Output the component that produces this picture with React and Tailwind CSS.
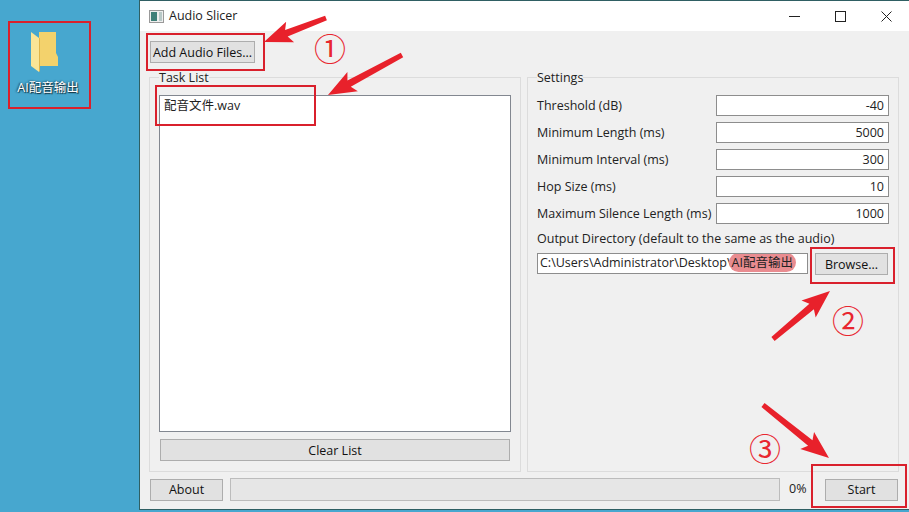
import React from "react";

const font = { fontFamily: '"Open Sans", "Noto Sans CJK SC", sans-serif' };

const settings = [
  ["Threshold (dB)", "-40"],
  ["Minimum Length (ms)", "5000"],
  ["Minimum Interval (ms)", "300"],
  ["Hop Size (ms)", "10"],
  ["Maximum Silence Length (ms)", "1000"],
];

// tapered red arrow from tail to head
function arrowPoints([x1, y1], [x2, y2]) {
  const len = Math.hypot(x2 - x1, y2 - y1);
  const ux = (x2 - x1) / len;
  const uy = (y2 - y1) / len;
  const nx = -uy;
  const ny = ux;
  const at = (along, side) =>
    `${x1 + ux * along + nx * side},${y1 + uy * along + ny * side}`;
  const neck = len - 24;
  return [
    at(0, -2.5),
    at(neck, -3.5),
    at(neck - 4, -11),
    at(len, 0),
    at(neck - 4, 11),
    at(neck, 3.5),
    at(0, 2.5),
  ].join(" ");
}

const arrows = [
  [[326, 18], [264, 42]],
  [[402, 55], [328, 95]],
  [[773, 339], [830, 291]],
  [[763, 405], [829, 458]],
];

function Btn({ className, children }) {
  return (
    <div className={`flex items-center justify-center whitespace-nowrap pt-[2px] bg-[#e1e1e1] border border-[#adadad] text-[12.5px] text-[#111] ${className}`}>
      {children}
    </div>
  );
}

function Mark({ className }) {
  return <div className={`absolute border-2 border-[#d9202c] ${className}`} />;
}

function Num({ className, children }) {
  return (
    <span className={`absolute text-[32px] leading-none text-[#e8262f] ${className}`} style={{ fontFamily: '"Noto Sans CJK SC", sans-serif' }}>
      {children}
    </span>
  );
}

export default function App() {
  return (
    <div className="relative flex w-[909px] h-[512px] overflow-hidden bg-[#47a7cf]" style={font}>
      {/* desktop */}
      <div className="w-[139px] shrink-0 flex flex-col items-center pt-[31px] pr-[43px]">
        <svg width="30" height="42" viewBox="0 0 30 42" className="shrink-0 mr-[6px]">
          <path d="M9 1h17v21l2 4v9H9z" fill="#f3d26c" />
          <path d="M1 1l8 6v34l-8-6z" fill="#fbe596" />
          <path d="M9 7v34l1-1V7z" fill="#e0b548" />
        </svg>
        <div className="mt-[6px] whitespace-nowrap text-[12.5px] leading-[18px] text-white [text-shadow:1px_1px_1px_#12303c,-1px_0_2px_#12303c]">
          AI配音输出
        </div>
      </div>

      {/* window */}
      <div className="w-[770px] shrink-0 flex flex-col h-[510px] border-l border-t border-b border-[#2f5f63] bg-[#f0f0f0] text-[12.5px] text-[#222]">
        <div className="h-[30px] shrink-0 bg-white flex items-center pl-[9px]">
          <svg width="15" height="13" viewBox="0 0 15 13" className="mr-[5px]">
            <rect x="0.5" y="0.5" width="14" height="12" fill="#eee" stroke="#999" />
            <rect x="2" y="2" width="6" height="9" fill="#3f7f78" />
            <rect x="10" y="2" width="3" height="9" fill="#b9c9c8" />
          </svg>
          <span>Audio Slicer</span>
          <div className="ml-auto flex">
            <div className="w-[46px] h-[30px] flex items-center justify-center">
              <svg width="11" height="11" viewBox="0 0 11 11"><path d="M0 5.5h11" stroke="#222" /></svg>
            </div>
            <div className="w-[46px] h-[30px] flex items-center justify-center">
              <svg width="11" height="11" viewBox="0 0 11 11"><rect x="0.5" y="0.5" width="10" height="10" fill="none" stroke="#222" /></svg>
            </div>
            <div className="w-[46px] h-[30px] flex items-center justify-center">
              <svg width="11" height="11" viewBox="0 0 11 11"><path d="M0.5 0.5l10 10M10.5 0.5l-10 10" stroke="#222" /></svg>
            </div>
          </div>
        </div>

        <div className="flex-1 flex flex-col pl-[9px] pr-[10px] pt-[10px] pb-[8px]">
          <Btn className="ml-[1px] w-[105px] h-[22px]">Add Audio Files...</Btn>

          <div className="flex gap-[6px] mt-[5px] h-[404px]">
            <fieldset className="w-[372px] h-[404px] border border-[#dcdcdc] px-[9px] pb-[9px] flex flex-col">
              <legend className="pt-[2px] text-[12.5px] leading-[16px]">Task List</legend>
              <div className="mt-[9px] h-[337px] border border-[#828790] bg-white pl-[4px] pt-[1px] leading-[18px]">
                配音文件.wav
              </div>
              <Btn className="mt-[7px] h-[22px] mx-[1px]">Clear List</Btn>
            </fieldset>

            <fieldset className="w-[372px] h-[404px] border border-[#dcdcdc] px-[9px]">
              <legend className="pt-[2px] text-[12.5px] leading-[16px]">Settings</legend>
              <div className="mt-[9px] flex flex-col gap-[6px]">
                {settings.map(([label, value]) => (
                  <div key={label} className="flex items-center justify-between h-[21px]">
                    <span className="pt-[2px] whitespace-nowrap">{label}</span>
                    <div className="w-[173px] h-[21px] border border-[#8d8d8d] bg-white text-right pr-[4px] leading-[20px]">
                      {value}
                    </div>
                  </div>
                ))}
              </div>
              <div className="mt-[6px] leading-[18px]">Output Directory (default to the same as the audio)</div>
              <div className="mt-[5px] flex items-start gap-[7px]">
                <div className="w-[271px] h-[21px] border border-[#8d8d8d] bg-white pl-[2px] leading-[18px] whitespace-nowrap overflow-hidden">
                  C:\Users\Administrator\Desktop\<span className="-ml-[3px] px-[3px] py-[1px] rounded-full bg-[#e98c90]">AI配音输出</span>
                </div>
                <Btn className="w-[73px] h-[22px]">Browse...</Btn>
              </div>
            </fieldset>
          </div>

          <div className="mt-[6px] flex items-center h-[23px]">
            <Btn className="ml-[1px] w-[73px] h-[22px]">About</Btn>
            <div className="ml-[7px] w-[550px] h-[23px] border border-[#bcbcbc] bg-[#e6e6e6]" />
            <span className="ml-[9px] w-[18px]">0%</span>
            <Btn className="ml-[18px] w-[73px] h-[22px]">Start</Btn>
          </div>
        </div>
      </div>

      {/* red annotations drawn over the screenshot */}
      <Mark className="left-[8px] top-[21px] w-[83px] h-[88px]" />
      <Mark className="left-[146px] top-[33px] w-[119px] h-[38px]" />
      <Mark className="left-[155px] top-[85px] w-[161px] h-[41px]" />
      <Mark className="left-[810px] top-[247px] w-[85px] h-[37px]" />
      <Mark className="left-[811px] top-[464px] w-[96px] h-[44px]" />
      <svg width="909" height="512" className="absolute left-0 top-0 pointer-events-none">
        {arrows.map(([a, b], i) => (
          <polygon key={i} points={arrowPoints(a, b)} fill="#e8212b" />
        ))}
      </svg>
      <Num className="left-[314px] top-[31px]">①</Num>
      <Num className="left-[832px] top-[303px]">②</Num>
      <Num className="left-[749px] top-[431px]">③</Num>
    </div>
  );
}
